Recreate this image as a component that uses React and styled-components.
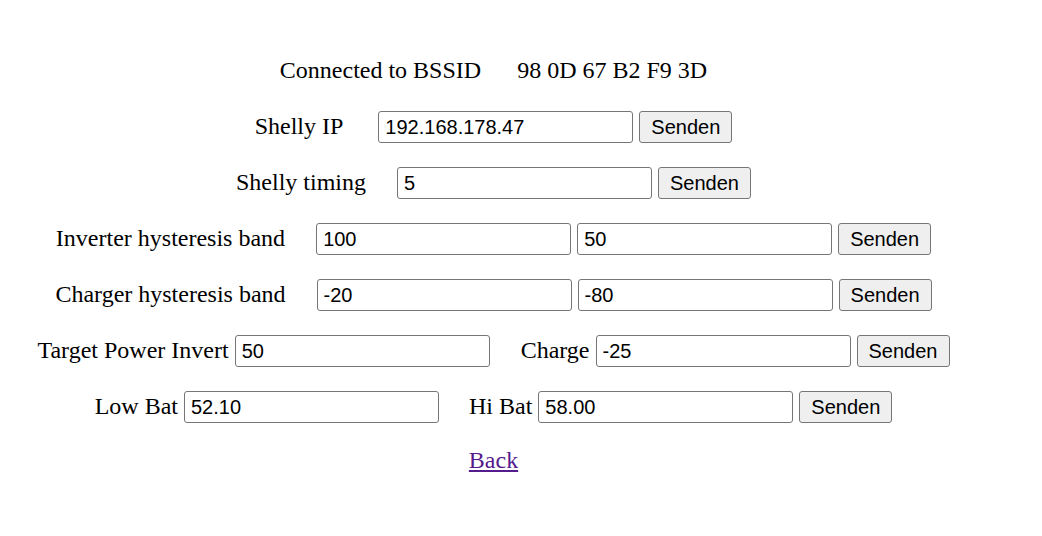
import styled, { createGlobalStyle } from "styled-components";

const GlobalStyle = createGlobalStyle`
  body {
    margin: 0;
    background: #fff;
    color: #000;
    font-family: "Liberation Serif", "Times New Roman", serif;
    font-size: 24px;
  }
`;

const rows = [
  { label: "Shelly IP", space: 29, fields: ["192.168.178.47"] },
  { label: "Shelly timing", space: 25, fields: ["5"] },
  { label: "Inverter hysteresis band", space: 25, fields: ["100", "50"] },
  { label: "Charger hysteresis band", space: 25, fields: ["-20", "-80"] },
];

const App = () => {
  return (
    <>
      <GlobalStyle />
      <Page>
        <Row>
          <Label $space={30}>Connected to BSSID</Label>
          <Label>98 0D 67 B2 F9 3D</Label>
        </Row>

        {rows.map((row) => (
          <Row key={row.label}>
            <Label $space={row.space}>{row.label}</Label>
            {row.fields.map((v, i) => (
              <Field key={i} type="text" defaultValue={v} />
            ))}
            <Button>Senden</Button>
          </Row>
        ))}

        <Row>
          <Label>Target Power Invert</Label>
          <Field type="text" defaultValue="50" />
          <Label $lead={25}>Charge</Label>
          <Field type="text" defaultValue="-25" />
          <Button>Senden</Button>
        </Row>

        <Row>
          <Label>Low Bat</Label>
          <Field type="text" defaultValue="52.10" />
          <Label $lead={24}>Hi Bat</Label>
          <Field type="text" defaultValue="58.00" />
          <Button>Senden</Button>
        </Row>

        <BackRow>
          <BackLink href="#">Back</BackLink>
        </BackRow>
      </Page>
    </>
  );
};

const Page = styled.div`
  width: 987px;
  padding-top: 55px;
  display: flex;
  flex-direction: column;
  gap: 24px;
`;

const Row = styled.div`
  display: flex;
  justify-content: center;
  align-items: center;
  gap: 6px;
  height: 32px;
  white-space: nowrap;
`;

const BackRow = styled(Row)`
  margin-top: -3px;
`;

const Label = styled.span`
  position: relative;
  top: -1px;
  margin-right: ${(p) => p.$space || 0}px;
  margin-left: ${(p) => p.$lead || 0}px;
`;

const Field = styled.input`
  box-sizing: border-box;
  width: 255px;
  height: 32px;
  margin: 0;
  padding: 0 5px 0 6px;
  border: 1px solid #767676;
  border-radius: 3px;
  background: #fff;
  color: #000;
  font-family: "Liberation Sans", Arial, sans-serif;
  font-size: 20px;
`;

const Button = styled.button`
  box-sizing: border-box;
  width: 93px;
  height: 32px;
  margin: 0;
  padding: 0 9px;
  border: 1px solid #767676;
  border-radius: 3px;
  background: #efefef;
  color: #000;
  font-family: "Liberation Sans", Arial, sans-serif;
  font-size: 20px;
`;

const BackLink = styled.a`
  color: #551a8b;
  text-decoration: underline;
`;

export default App;
